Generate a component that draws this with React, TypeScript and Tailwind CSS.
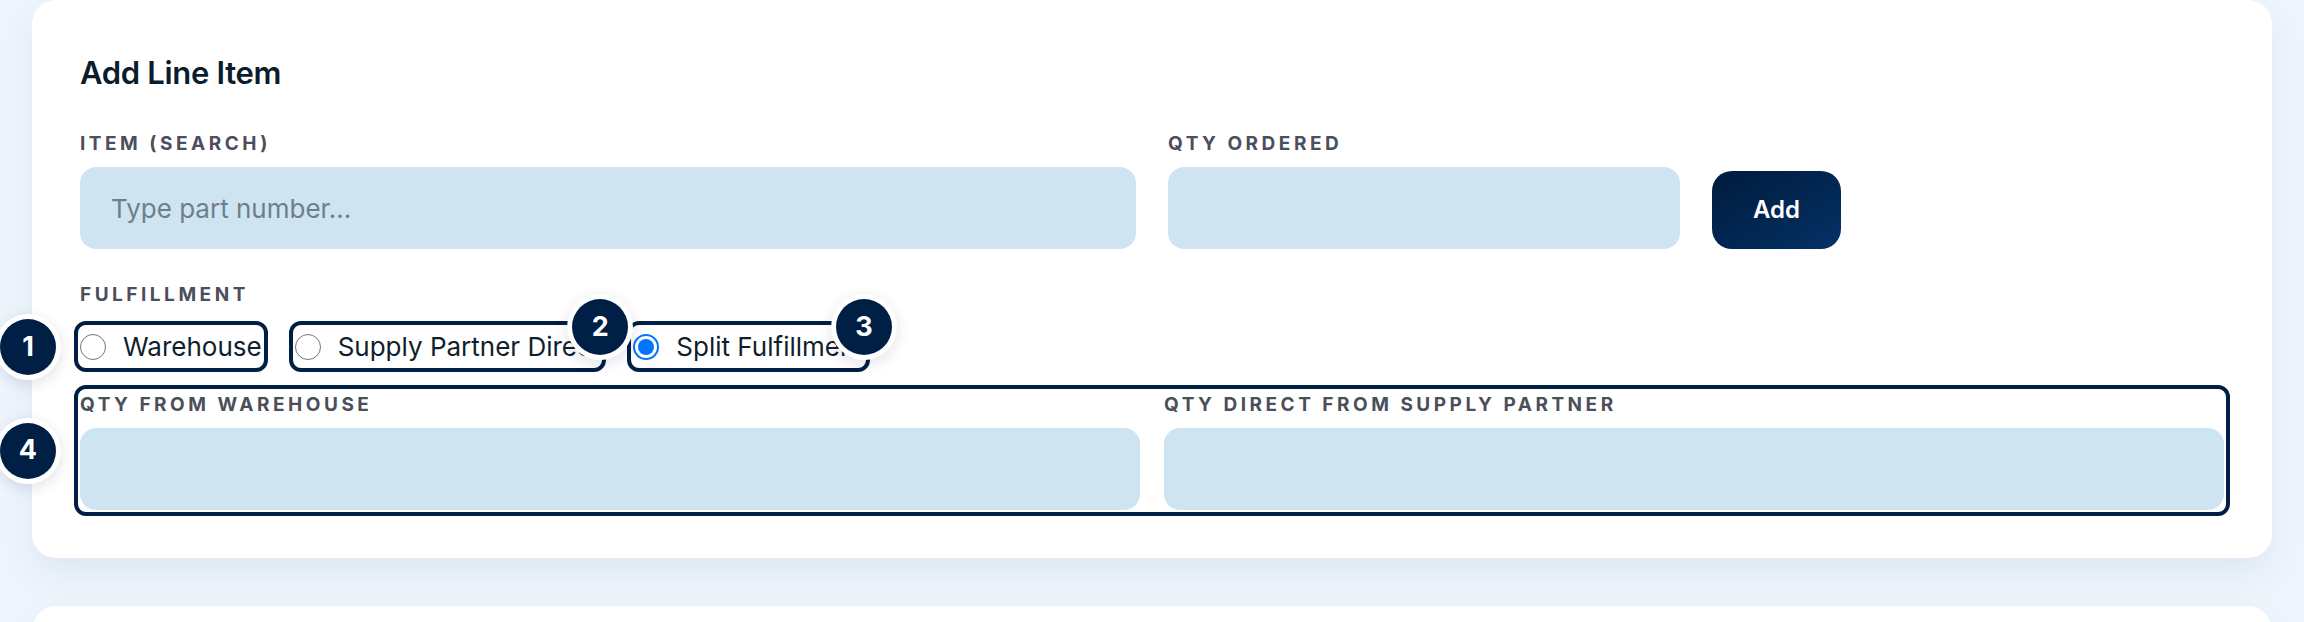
import React from 'react'

function FieldLabel({ children }: { children: React.ReactNode }) {
  return (
    <div className="mb-[10px] text-[19px] leading-[27px] font-bold tracking-[0.185em] text-[#4a4f5b] uppercase">
      {children}
    </div>
  )
}

function Badge({ n, className }: { n: number; className: string }) {
  return (
    <span
      className={`absolute z-10 flex h-[56px] w-[56px] items-center justify-center rounded-full bg-[#001f45] text-[27px] font-bold text-white shadow-[0_0_0_5px_#ffffff,0_4px_14px_5px_rgba(0,25,70,0.12)] ${className}`}
    >
      {n}
    </span>
  )
}

function Radio({ checked }: { checked?: boolean }) {
  if (checked) {
    return (
      <span className="flex h-[26px] w-[26px] shrink-0 items-center justify-center rounded-full border-[2px] border-[#0075ff] bg-white">
        <span className="h-[16px] w-[16px] rounded-full bg-[#0075ff]" />
      </span>
    )
  }
  return <span className="h-[26px] w-[26px] shrink-0 rounded-full border-[1.5px] border-[#767676] bg-white" />
}

const inputCls =
  'h-[82px] w-full rounded-[16px] bg-[#cfe4f1] px-[31px] text-[26px] text-[#0f1e2d] placeholder:text-[#6f7e8b] outline-none'

const options = [
  { label: 'Warehouse', checked: false, badge: 1 },
  { label: 'Supply Partner Direct', checked: false, badge: 2 },
  { label: 'Split Fulfillment', checked: true, badge: 3 },
]

export default function App() {
  return (
    <div className="h-[622px] overflow-hidden bg-[#eef5fc] px-8 font-['Inter',sans-serif]">
      <div className="rounded-3xl bg-white px-12 pt-[55px] pb-12 shadow-[0_16px_40px_rgba(20,50,100,0.07)]">
        <h2 className="text-[31px] leading-[36px] font-semibold tracking-[-0.01em] text-[#0b1d2c]">Add Line Item</h2>

        <div className="mt-[39px] grid grid-cols-12 items-end gap-x-8">
          <div className="col-span-6">
            <FieldLabel>Item (Search)</FieldLabel>
            <input className={inputCls} placeholder="Type part number..." />
          </div>
          <div className="col-span-3">
            <FieldLabel>Qty Ordered</FieldLabel>
            <input className={inputCls} />
          </div>
          <div className="col-span-3">
            <button className="h-[78px] rounded-[20px] bg-gradient-to-br from-[#001b3d] to-[#053266] px-[41px] text-[24px] font-semibold text-white">
              Add
            </button>
          </div>
        </div>

        <div className="mt-8">
          <div className="mb-[19px] text-[19px] leading-[27px] font-bold tracking-[0.185em] text-[#4a4f5b] uppercase">
            Fulfillment
          </div>
          <div className="flex gap-[33px]">
            {options.map((o) => (
              <label
                key={o.label}
                className="relative flex h-[39px] items-center gap-[17px] rounded-[6px] text-[26px] leading-[36px] text-[#0f1e2d] outline-4 outline-offset-2 outline-[#001f45]"
              >
                <Radio checked={o.checked} />
                <span>{o.label}</span>
                {o.badge === 1 ? (
                  <Badge n={1} className="top-1/2 -left-[80px] -translate-y-1/2" />
                ) : (
                  <Badge n={o.badge} className="top-0 right-0 translate-x-1/2 -translate-y-1/2" />
                )}
              </label>
            ))}
          </div>
        </div>

        <div className="relative mt-[25px] grid grid-cols-2 gap-x-6 rounded-[6px] outline-4 outline-offset-2 outline-[#001f45]">
          <div>
            <FieldLabel>Qty From Warehouse</FieldLabel>
            <input className={inputCls} />
          </div>
          <div>
            <FieldLabel>Qty Direct From Supply Partner</FieldLabel>
            <input className={inputCls} />
          </div>
          <Badge n={4} className="top-1/2 -left-[80px] -translate-y-1/2" />
        </div>
      </div>

      <div className="mt-12 h-24 rounded-t-3xl bg-white shadow-[0_16px_40px_rgba(20,50,100,0.07)]" />
    </div>
  )
}
